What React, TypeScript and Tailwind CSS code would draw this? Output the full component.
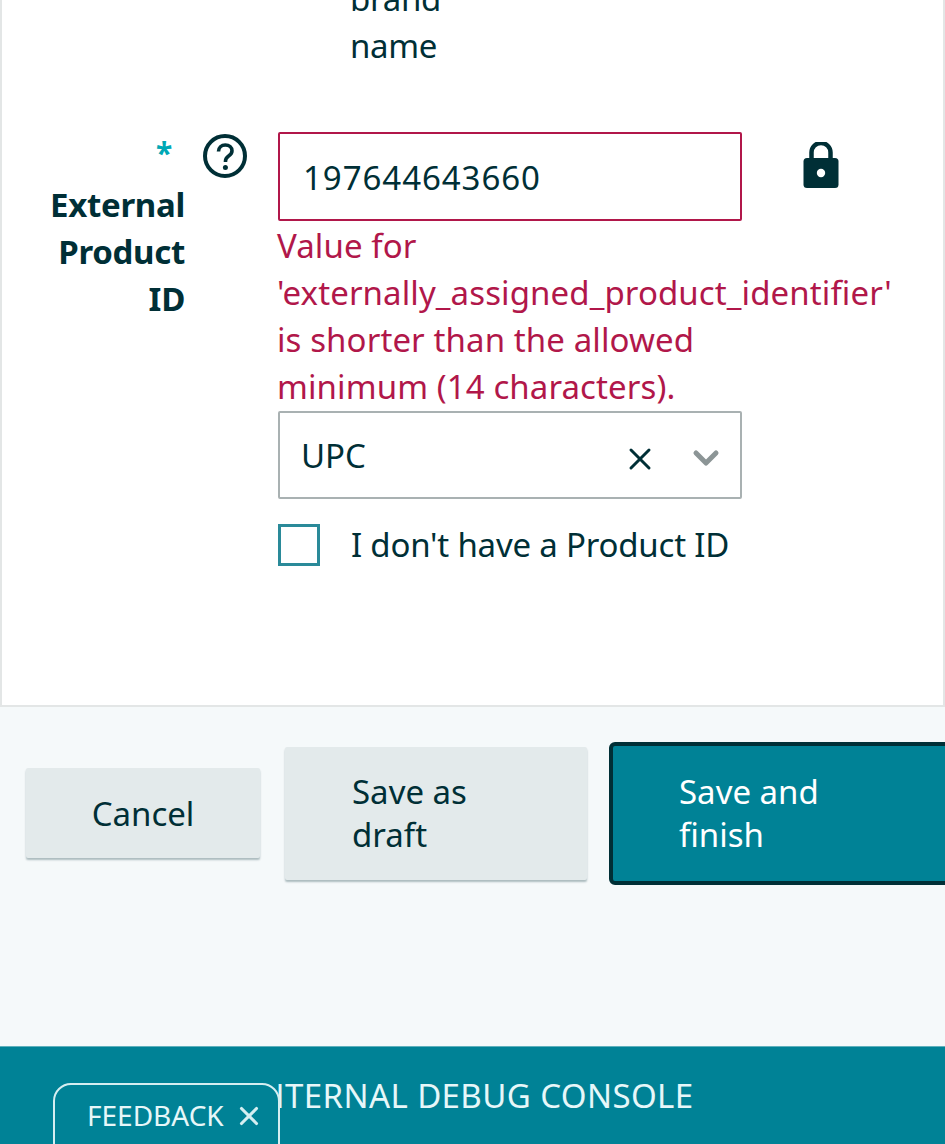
import { ChevronDown, X } from "lucide-react";

const font = "font-['Noto_Sans',sans-serif]";

function HelpIcon() {
  return (
    <svg viewBox="0 0 44 44" className="w-[44px] h-[44px] shrink-0">
      <circle cx="22" cy="22" r="20" fill="none" stroke="#002f36" strokeWidth="4" />
      <path d="M15.500 17.500c0-4 3-6.500 6.800-6.500 3.900 0 6.700 2.300 6.700 5.800 0 2.600-1.500 4-3.400 5.300-2 1.400-3.100 2.400-3.100 5v1" fill="none" stroke="#002f36" strokeWidth="3.600" />
      <circle cx="22.400" cy="33.500" r="2.500" fill="#002f36" />
    </svg>
  );
}

function LockIcon() {
  return (
    <svg viewBox="0 0 36 46" className="w-[36px] h-[46px]">
      <path d="M8.500 18v-7.500a9.500 9.500 0 0 1 19 0V18" fill="none" stroke="#002f36" strokeWidth="4.500" />
      <rect x="0.500" y="16" width="35" height="30" rx="3.500" fill="#002f36" />
      <circle cx="18" cy="31" r="4.200" fill="#fff" />
    </svg>
  );
}

export default function App() {
  return (
    <div className={`${font} relative w-[945px] h-[1144px] overflow-hidden bg-[#f5f9fa] text-[#002f36] text-[33px] leading-[47px]`}>
      <div className="flex flex-col h-[707px] bg-white border-x-2 border-b-2 border-[#e3e6e6]">
        <div className="pl-[348px] -mt-[25px] tracking-[-0.3px]">
          <div className="h-[47px]">brand</div>
          <div className="h-[47px]">name</div>
        </div>
        <div className="flex mt-[63px]">
          <div className="w-[183px] shrink-0 text-right font-bold pt-[1px] tracking-[-0.3px]">
            <div className="text-[#00a8b5] text-[30px] leading-[40px] pr-[13px]">*</div>
            <div className="mt-[8px]">External</div>
            <div>Product</div>
            <div>ID</div>
          </div>
          <div className="w-[93px] shrink-0 pl-[18px] pt-[2px]">
            <HelpIcon />
          </div>
          <div className="w-[464px] shrink-0">
            <div className="h-[89px] border-2 border-[#b1174a] rounded-[2px] pl-[23px] pt-[20px] tracking-[0.95px]">197644643660</div>
            <div className="text-[#b1174a] mt-[1px] -ml-[1px] whitespace-nowrap tracking-[0.1px]">
              <div>Value for</div>
              <div>'externally_assigned_product_identifier'</div>
              <div>is shorter than the allowed</div>
              <div>minimum (14 characters).</div>
            </div>
            <div className="h-[88px] mt-[1px] border-2 border-[#a9b1b2] rounded-[2px] flex items-center pl-[21px] pr-[14px]">
              <span className="flex-1">UPC</span>
              <X className="w-[36px] h-[36px] text-[#002f36] mr-[28px] mt-[7px]" strokeWidth={2} />
              <ChevronDown className="w-[40px] h-[40px] text-[#8c9596] mt-[5px]" strokeWidth={3} />
            </div>
            <div className="flex items-center mt-[22px]">
              <div className="w-[42px] h-[42px] border-[3px] border-[#2a8a99] shrink-0" />
              <span className="ml-[31px] whitespace-nowrap tracking-[-0.2px]">I don't have a Product ID</span>
            </div>
          </div>
          <div className="ml-[61px] pt-[10px]">
            <LockIcon />
          </div>
        </div>
      </div>

      <div className="flex items-center h-[339px] pl-[26px] pb-[127px]">
        <button className="w-[234px] h-[90px] shrink-0 bg-[#e3eaeb] rounded-[2px] shadow-[0_2px_2px_rgba(0,47,54,0.3)]">Cancel</button>
        <button className="w-[302px] h-[133px] ml-[25px] shrink-0 bg-[#e3eaeb] rounded-[2px] shadow-[0_2px_2px_rgba(0,47,54,0.3)] text-left pl-[67px] leading-[43px]">
          Save as<br />draft
        </button>
        <button className="w-[360px] h-[143px] ml-[22px] shrink-0 bg-[#008296] border-[4px] border-[#002f36] rounded-[6px] text-white text-left pl-[66px] leading-[43px]">
          Save and<br />finish
        </button>
      </div>

      <div className="h-[98px] bg-[#008296] text-[#e6f7f9] border-t border-[#5fb0bc] pl-[248px] pt-[25px] whitespace-nowrap tracking-[0.4px]">
        INTERNAL DEBUG CONSOLE
      </div>

      <div className="absolute left-[53px] top-[1083px] w-[227px] h-[70px] bg-[#008296] border-2 border-[#d5eef1] rounded-t-[18px] flex items-start pl-[32px] pt-[8px] text-[#e6f7f9] text-[28px] leading-[44px]">
        FEEDBACK
        <X className="w-[30px] h-[30px] ml-[10px] mt-[8px] text-[#d5eef1]" strokeWidth={2.500} />
      </div>
    </div>
  );
}
